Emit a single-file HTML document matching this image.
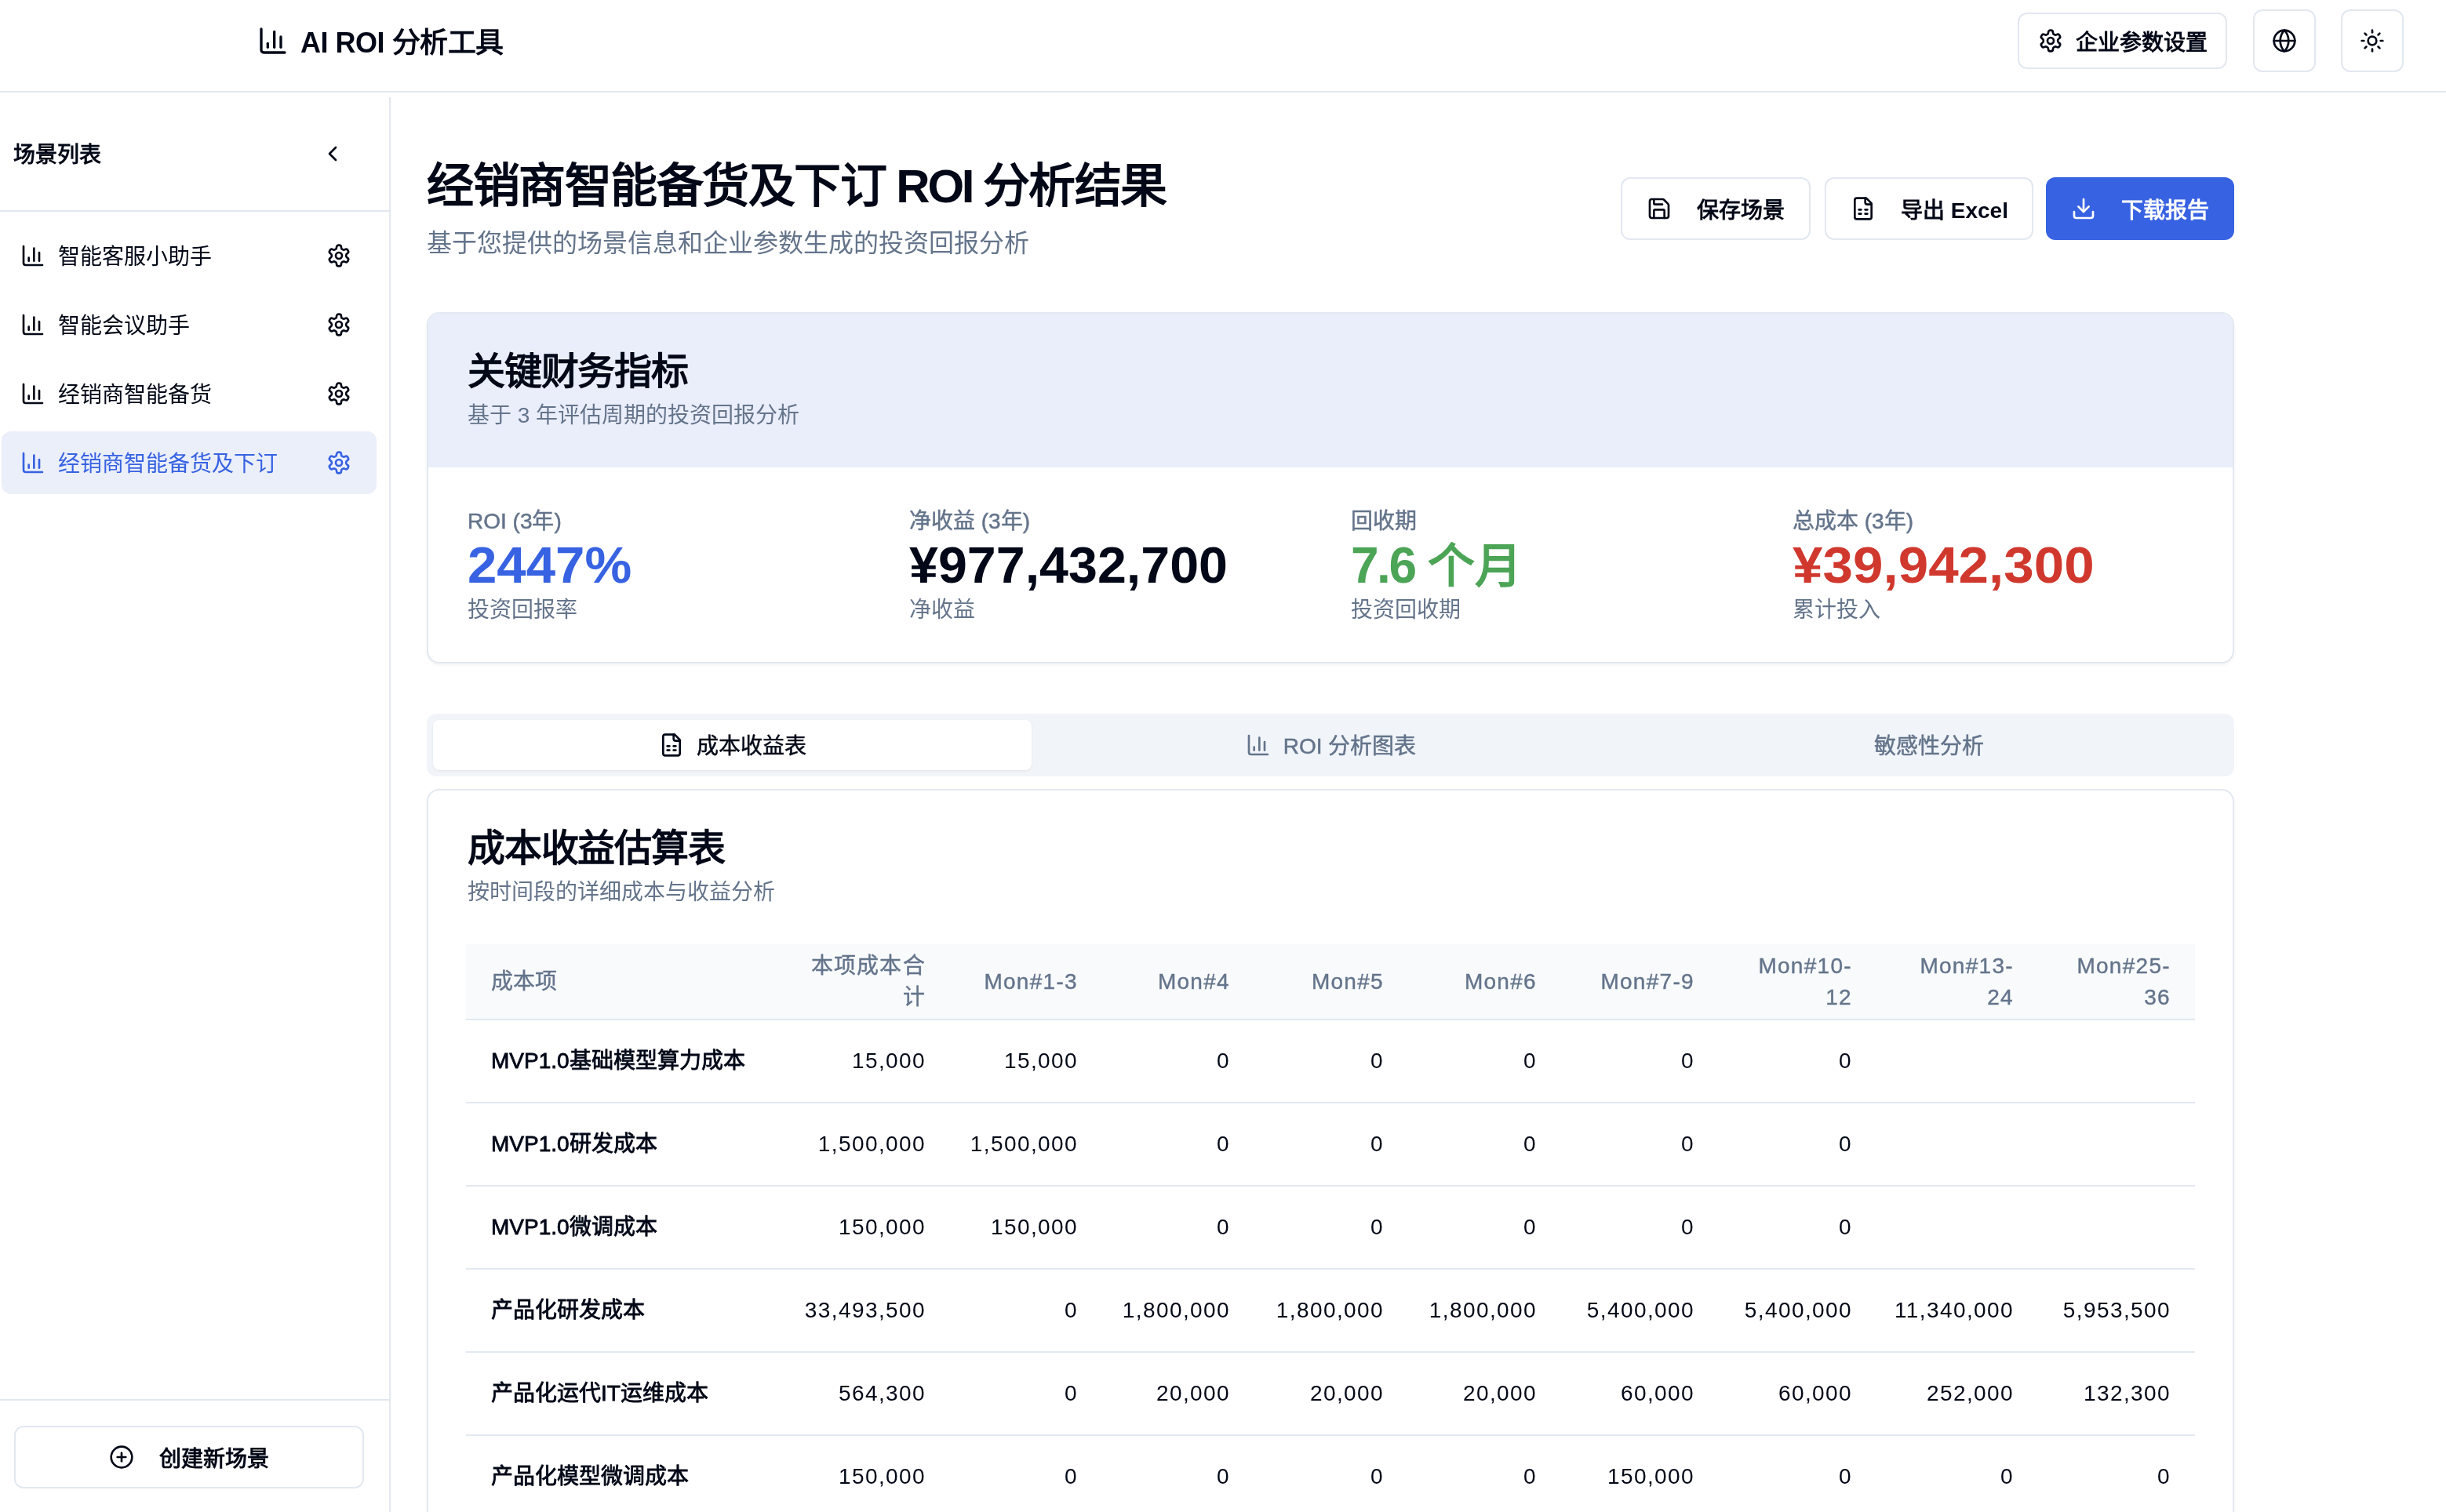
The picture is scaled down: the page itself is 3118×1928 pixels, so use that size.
<!DOCTYPE html>
<html lang="zh-CN">
<head>
<meta charset="utf-8">
<title>AI ROI 分析工具</title>
<style>
*{box-sizing:border-box;margin:0;padding:0}
html,body{width:3118px;height:1928px;overflow:hidden;background:#fff}
body>*{will-change:transform}
body{font-family:"Liberation Sans",sans-serif;color:#020817;position:relative}
svg{display:block;fill:none;stroke:currentColor;stroke-width:2;stroke-linecap:round;stroke-linejoin:round}
.abs{position:absolute}
.nw{white-space:nowrap}
.btn{position:absolute;display:flex;align-items:center;border:2px solid #e2e8f0;border-radius:12px;background:#fff;font-size:28px;font-weight:700;color:#020817;white-space:nowrap}
#header{position:absolute;left:0;top:0;width:3118px;height:118px;border-bottom:2px solid #e2e8f0}
#sidebar{position:absolute;left:0;top:124px;width:498px;height:1804px;border-right:2px solid #e2e8f0}
.side-item{position:absolute;left:2px;width:478px;height:80px;border-radius:12px}
.side-item .ic{position:absolute;left:24px;top:24px}
.side-item .tx{position:absolute;left:72px;top:2px;height:80px;line-height:80px;font-size:28px;white-space:nowrap}
.side-item .gear{position:absolute;left:414px;top:24px}
.side-item.active{background:#ebeffa;color:#3762e2}
.card{position:absolute;border:2px solid #e2e8f0;border-radius:16px;background:#fff;overflow:hidden;box-shadow:0 2px 4px rgba(0,0,0,0.05)}
.muted{color:#64748b}
.metric{position:absolute;top:0}
.metric .lb{position:absolute;left:0;top:245px;height:40px;line-height:40px;font-size:28px;font-weight:500;-webkit-text-stroke:0.5px currentColor;color:#64748b;white-space:nowrap}
.metric .val{position:absolute;left:0;top:281px;height:80px;line-height:80px;font-size:60px;font-weight:700;white-space:nowrap}
.metric .sub{position:absolute;left:0;top:358px;height:40px;line-height:40px;font-size:28px;color:#64748b;white-space:nowrap}
table{border-collapse:collapse;table-layout:fixed}
th,td{font-size:28px;text-align:right;padding:0 32px;white-space:nowrap}
th{color:#64748b;font-weight:500;line-height:40px;height:96px;letter-spacing:1.3px;padding-right:31px}
th:first-child{letter-spacing:0}
th{-webkit-text-stroke:0.4px currentColor}
td{height:106px;line-height:40px;letter-spacing:1.4px;padding-right:31px;padding-left:0}
td:first-child{letter-spacing:0;padding-left:32px;-webkit-text-stroke:0.8px currentColor}
tr{border-bottom:2px solid #e2e8f0}
th:first-child,td:first-child{text-align:left}
td:first-child{font-weight:500}
</style>
</head>
<body>
<svg width="0" height="0" style="position:absolute">
  <defs>
    <symbol id="i-chart" viewBox="0 0 24 24"><path d="M3 3v16a2 2 0 0 0 2 2h16"/><path d="M18 17V9"/><path d="M13 17V5"/><path d="M8 17v-3"/></symbol>
    <symbol id="i-gear" viewBox="0 0 24 24"><path d="M12.22 2h-.44a2 2 0 0 0-2 2v.18a2 2 0 0 1-1 1.73l-.43.25a2 2 0 0 1-2 0l-.15-.08a2 2 0 0 0-2.73.73l-.22.38a2 2 0 0 0 .73 2.73l.15.1a2 2 0 0 1 1 1.72v.51a2 2 0 0 1-1 1.74l-.15.09a2 2 0 0 0-.73 2.73l.22.38a2 2 0 0 0 2.73.73l.15-.08a2 2 0 0 1 2 0l.43.25a2 2 0 0 1 1 1.73V20a2 2 0 0 0 2 2h.44a2 2 0 0 0 2-2v-.18a2 2 0 0 1 1-1.73l.43-.25a2 2 0 0 1 2 0l.15.08a2 2 0 0 0 2.73-.73l.22-.39a2 2 0 0 0-.73-2.73l-.15-.08a2 2 0 0 1-1-1.74v-.5a2 2 0 0 1 1-1.74l.15-.09a2 2 0 0 0 .73-2.73l-.22-.38a2 2 0 0 0-2.73-.73l-.15.08a2 2 0 0 1-2 0l-.43-.25a2 2 0 0 1-1-1.73V4a2 2 0 0 0-2-2z"/><circle cx="12" cy="12" r="3"/></symbol>
    <symbol id="i-globe" viewBox="0 0 24 24"><circle cx="12" cy="12" r="10"/><path d="M12 2a14.5 14.5 0 0 0 0 20 14.5 14.5 0 0 0 0-20"/><path d="M2 12h20"/></symbol>
    <symbol id="i-sun" viewBox="0 0 24 24"><circle cx="12" cy="12" r="4"/><path d="M12 2v2"/><path d="M12 20v2"/><path d="m4.93 4.93 1.41 1.41"/><path d="m17.66 17.66 1.41 1.41"/><path d="M2 12h2"/><path d="M20 12h2"/><path d="m6.34 17.66-1.41 1.41"/><path d="m19.07 4.93-1.41 1.41"/></symbol>
    <symbol id="i-chev" viewBox="0 0 24 24"><path d="m15 18-6-6 6-6"/></symbol>
    <symbol id="i-plus" viewBox="0 0 24 24"><circle cx="12" cy="12" r="10"/><path d="M8 12h8"/><path d="M12 8v8"/></symbol>
    <symbol id="i-save" viewBox="0 0 24 24"><path d="M15.2 3a2 2 0 0 1 1.4.6l3.8 3.8a2 2 0 0 1 .6 1.4V19a2 2 0 0 1-2 2H5a2 2 0 0 1-2-2V5a2 2 0 0 1 2-2z"/><path d="M17 21v-7a1 1 0 0 0-1-1H8a1 1 0 0 0-1 1v7"/><path d="M7 3v4a1 1 0 0 0 1 1h7"/></symbol>
    <symbol id="i-sheet" viewBox="0 0 24 24"><path d="M15 2H6a2 2 0 0 0-2 2v16a2 2 0 0 0 2 2h12a2 2 0 0 0 2-2V7Z"/><path d="M14 2v4a2 2 0 0 0 2 2h4"/><path d="M8 13h2"/><path d="M14 13h2"/><path d="M8 17h2"/><path d="M14 17h2"/></symbol>
    <symbol id="i-down" viewBox="0 0 24 24"><path d="M21 15v4a2 2 0 0 1-2 2H5a2 2 0 0 1-2-2v-4"/><path d="M7 10l5 5 5-5"/><path d="M12 15V3"/></symbol>
  </defs>
</svg>

<!-- HEADER -->
<div id="header">
  <svg class="abs" style="left:328px;top:32px" width="40" height="40"><use href="#i-chart"/></svg>
  <div class="abs nw" style="left:383px;top:31px;height:48px;line-height:48px;font-size:36px;font-weight:700;letter-spacing:-0.5px">AI ROI 分析工具</div>
  <div class="btn" style="left:2572px;top:16px;width:267px;height:72px;padding-left:24px">
    <svg width="32" height="32"><use href="#i-gear"/></svg><span style="margin-left:16px">企业参数设置</span>
  </div>
  <div class="btn" style="left:2872px;top:12px;width:80px;height:80px;justify-content:center">
    <svg width="32" height="32"><use href="#i-globe"/></svg>
  </div>
  <div class="btn" style="left:2984px;top:12px;width:80px;height:80px;justify-content:center">
    <svg width="32" height="32"><use href="#i-sun"/></svg>
  </div>
</div>

<!-- SIDEBAR -->
<div id="sidebar">
  <div class="abs" style="left:0;top:0;width:496px;height:146px;border-bottom:2px solid #e2e8f0">
    <div class="abs nw" style="left:17px;top:54px;height:40px;line-height:40px;font-size:28px;font-weight:700">场景列表</div>
    <svg class="abs" style="left:408px;top:56px" width="32" height="32"><use href="#i-chev"/></svg>
  </div>
  <div class="side-item" style="top:162px">
    <svg class="ic" width="32" height="32"><use href="#i-chart"/></svg><div class="tx">智能客服小助手</div><svg class="gear" width="32" height="32"><use href="#i-gear"/></svg>
  </div>
  <div class="side-item" style="top:250px">
    <svg class="ic" width="32" height="32"><use href="#i-chart"/></svg><div class="tx">智能会议助手</div><svg class="gear" width="32" height="32"><use href="#i-gear"/></svg>
  </div>
  <div class="side-item" style="top:338px">
    <svg class="ic" width="32" height="32"><use href="#i-chart"/></svg><div class="tx">经销商智能备货</div><svg class="gear" width="32" height="32"><use href="#i-gear"/></svg>
  </div>
  <div class="side-item active" style="top:426px">
    <svg class="ic" width="32" height="32"><use href="#i-chart"/></svg><div class="tx">经销商智能备货及下订</div><svg class="gear" width="32" height="32"><use href="#i-gear"/></svg>
  </div>
  <div class="abs" style="left:0;top:1660px;width:496px;height:2px;background:#e2e8f0"></div>
  <div class="btn" style="left:18px;top:1694px;width:446px;height:80px;justify-content:center">
    <svg width="32" height="32"><use href="#i-plus"/></svg><span style="margin-left:32px">创建新场景</span>
  </div>
</div>

<!-- MAIN TITLE -->
<div class="abs nw" style="left:544px;top:200px;height:76px;line-height:76px;font-size:60px;font-weight:700;letter-spacing:-1.5px">经销商智能备货及下订<span style="letter-spacing:-3.3px"> ROI </span>分析结果</div>
<div class="abs nw muted" style="left:544px;top:290px;height:40px;line-height:40px;font-size:32px">基于您提供的场景信息和企业参数生成的投资回报分析</div>

<div class="btn" style="left:2066px;top:226px;width:242px;height:80px;padding-left:31px">
  <svg width="32" height="32"><use href="#i-save"/></svg><span style="margin-left:32px">保存场景</span>
</div>
<div class="btn" style="left:2326px;top:226px;width:266px;height:80px;padding-left:31px">
  <svg width="32" height="32"><use href="#i-sheet"/></svg><span style="margin-left:32px">导出 Excel</span>
</div>
<div class="btn" style="left:2608px;top:226px;width:240px;height:80px;padding-left:30px;background:#3762e2;border-color:#3762e2;color:#fff">
  <svg width="32" height="32"><use href="#i-down"/></svg><span style="margin-left:32px">下载报告</span>
</div>

<!-- KEY METRICS CARD -->
<div class="card" style="left:544px;top:398px;width:2304px;height:448px">
  <div class="abs" style="left:0;top:0;width:2300px;height:196px;background:#eaeefa"></div>
  <div class="abs nw" style="left:50px;top:44px;height:60px;line-height:60px;font-size:48px;font-weight:700;letter-spacing:-1.2px">关键财务指标</div>
  <div class="abs nw muted" style="left:50px;top:110px;height:40px;line-height:40px;font-size:28px">基于 3 年评估周期的投资回报分析</div>
  <div class="metric" style="left:50px"><div class="lb">ROI (3年)</div><div class="val" style="color:#3762e2;font-size:64px;transform:scaleX(1.05);transform-origin:0 50%">2447%</div><div class="sub">投资回报率</div></div>
  <div class="metric" style="left:613px"><div class="lb">净收益 (3年)</div><div class="val" style="font-size:64px;transform:scaleX(1.037);transform-origin:0 50%">¥977,432,700</div><div class="sub">净收益</div></div>
  <div class="metric" style="left:1176px"><div class="lb">回收期</div><div class="val" style="color:#4ca456"><span style="font-size:64px;letter-spacing:-2.5px">7.6</span> 个月</div><div class="sub">投资回收期</div></div>
  <div class="metric" style="left:1739px"><div class="lb">总成本 (3年)</div><div class="val" style="color:#d0382e;font-size:64px;transform:scaleX(1.081);transform-origin:0 50%">¥39,942,300</div><div class="sub">累计投入</div></div>
</div>

<!-- TABS -->
<div class="abs" style="left:544px;top:910px;width:2304px;height:80px;background:#f1f5f9;border-radius:12px">
  <div class="abs" style="left:8px;top:8px;width:763px;height:64px;background:#fff;border-radius:8px;box-shadow:0 1px 3px rgba(0,0,0,0.08)"></div>
  <div class="abs nw" style="left:8px;top:8px;width:763px;height:64px;display:flex;align-items:center;justify-content:center;font-size:28px;font-weight:500;-webkit-text-stroke:0.5px currentColor">
    <svg width="32" height="32"><use href="#i-sheet"/></svg><span style="margin-left:16px;position:relative;top:-1px">成本收益表</span>
  </div>
  <div class="abs nw" style="left:771px;top:8px;width:763px;height:64px;display:flex;align-items:center;justify-content:center;font-size:28px;font-weight:500;-webkit-text-stroke:0.5px currentColor;color:#64748b">
    <svg width="32" height="32"><use href="#i-chart"/></svg><span style="margin-left:16px;position:relative;top:-1px">ROI 分析图表</span>
  </div>
  <div class="abs nw" style="left:1534px;top:8px;width:762px;height:64px;display:flex;align-items:center;justify-content:center;font-size:28px;font-weight:500;-webkit-text-stroke:0.5px currentColor;color:#64748b"><span style="position:relative;top:-1px">敏感性分析</span></div>
</div>

<!-- TABLE CARD -->
<div class="card" style="left:544px;top:1006px;width:2304px;height:1000px">
  <div class="abs nw" style="left:50px;top:44px;height:60px;line-height:60px;font-size:48px;font-weight:700;letter-spacing:-1.2px">成本收益估算表</div>
  <div class="abs nw muted" style="left:50px;top:110px;height:40px;line-height:40px;font-size:28px">按时间段的详细成本与收益分析</div>
  <table class="abs" style="left:48px;top:196px;width:2204px">
    <colgroup><col style="width:399px"><col style="width:218px"><col style="width:194px"><col style="width:194px"><col style="width:196px"><col style="width:195px"><col style="width:201px"><col style="width:201px"><col style="width:206px"><col style="width:200px"></colgroup>
    <thead><tr style="background:#f8fafc">
      <th>成本项</th><th>本项成本合<br>计</th><th>Mon#1-3</th><th>Mon#4</th><th>Mon#5</th><th>Mon#6</th><th>Mon#7-9</th><th>Mon#10-<br>12</th><th>Mon#13-<br>24</th><th>Mon#25-<br>36</th>
    </tr></thead>
    <tbody>
      <tr><td>MVP1.0基础模型算力成本</td><td>15,000</td><td>15,000</td><td>0</td><td>0</td><td>0</td><td>0</td><td>0</td><td></td><td></td></tr>
      <tr><td>MVP1.0研发成本</td><td>1,500,000</td><td>1,500,000</td><td>0</td><td>0</td><td>0</td><td>0</td><td>0</td><td></td><td></td></tr>
      <tr><td>MVP1.0微调成本</td><td>150,000</td><td>150,000</td><td>0</td><td>0</td><td>0</td><td>0</td><td>0</td><td></td><td></td></tr>
      <tr><td>产品化研发成本</td><td>33,493,500</td><td>0</td><td>1,800,000</td><td>1,800,000</td><td>1,800,000</td><td>5,400,000</td><td>5,400,000</td><td>11,340,000</td><td>5,953,500</td></tr>
      <tr><td>产品化运代IT运维成本</td><td>564,300</td><td>0</td><td>20,000</td><td>20,000</td><td>20,000</td><td>60,000</td><td>60,000</td><td>252,000</td><td>132,300</td></tr>
      <tr><td>产品化模型微调成本</td><td>150,000</td><td>0</td><td>0</td><td>0</td><td>0</td><td>150,000</td><td>0</td><td>0</td><td>0</td></tr>
    </tbody>
  </table>
</div>

</body>
</html>
